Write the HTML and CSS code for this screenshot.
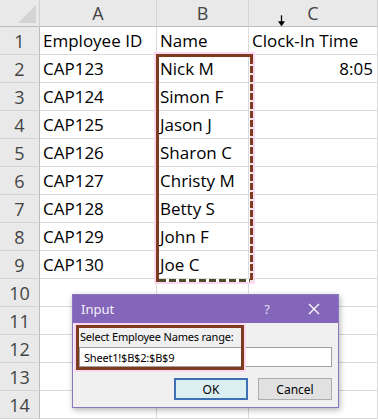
FILE: index.html
```html
<!DOCTYPE html>
<html lang="en">
<head>
    <meta charset="UTF-8">
    <title>Clock-In Sheet</title>
    <link rel="stylesheet" href="styles.css">
</head>
<body>

    <div id="sheet">
        <div class="grid">
            <div class="corner"><span class="tri"></span></div>
            <div class="colhead">A</div>
            <div class="colhead">B</div>
            <div class="colhead">C</div>

            <div class="rowhead">1</div><div class="cell">Employee ID</div><div class="cell">Name</div><div class="cell">Clock-In Time</div>
            <div class="rowhead">2</div><div class="cell">CAP123</div><div class="cell">Nick M</div><div class="cell num">8:05</div>
            <div class="rowhead">3</div><div class="cell">CAP124</div><div class="cell">Simon F</div><div class="cell"></div>
            <div class="rowhead">4</div><div class="cell">CAP125</div><div class="cell">Jason J</div><div class="cell"></div>
            <div class="rowhead">5</div><div class="cell">CAP126</div><div class="cell">Sharon C</div><div class="cell"></div>
            <div class="rowhead">6</div><div class="cell">CAP127</div><div class="cell">Christy M</div><div class="cell"></div>
            <div class="rowhead">7</div><div class="cell">CAP128</div><div class="cell">Betty S</div><div class="cell"></div>
            <div class="rowhead">8</div><div class="cell">CAP129</div><div class="cell">John F</div><div class="cell"></div>
            <div class="rowhead">9</div><div class="cell">CAP130</div><div class="cell">Joe C</div><div class="cell"></div>
            <div class="rowhead">10</div><div class="cell"></div><div class="cell"></div><div class="cell"></div>
            <div class="rowhead">11</div><div class="cell"></div><div class="cell"></div><div class="cell"></div>
            <div class="rowhead">12</div><div class="cell"></div><div class="cell"></div><div class="cell"></div>
            <div class="rowhead">13</div><div class="cell"></div><div class="cell"></div><div class="cell"></div>
            <div class="rowhead">14</div><div class="cell"></div><div class="cell"></div><div class="cell"></div>
        </div>

        <!-- selected range B2:B9 -->
        <div class="selection"><div class="ants"></div></div>

        <!-- column select cursor -->
        <svg class="cursor" width="9" height="12" viewBox="0 0 9 12">
            <path d="M3.5 0h2v6h3l-4 6-4-6h3z" fill="#000" stroke="#fff" stroke-width="0.6"/>
        </svg>

        <div class="dialog">
            <div class="titlebar">
                <span class="title">Input</span>
                <span class="help">?</span>
                <svg class="close" width="12" height="12" viewBox="0 0 12 12">
                    <path d="M1 1L11 11M11 1L1 11" stroke="#fff" stroke-width="1.3"/>
                </svg>
            </div>
            <div class="dbody">
                <div class="highlight"></div>
                <label for="rng">Select Employee Names range:</label>
                <input type="text" id="rng" value="Sheet1!$B$2:$B$9">
                <div class="buttons">
                    <button class="ok">OK</button>
                    <button class="cancel">Cancel</button>
                </div>
            </div>
        </div>
    </div>

</body>
</html>
```

FILE: styles.css
```css
body {
    margin: 0;
    background-color: #fff;
    font-family: "Open Sans", Arial, sans-serif;
}
#sheet {
    position: relative;
    width: 378px;
    height: 420px;
    overflow: hidden;
}
.grid {
    display: grid;
    grid-template-columns: 40px 117px 92px 129px;
    grid-template-rows: 27px repeat(14, 28px);
}
.corner {
    background-color: #e9e9e9;
    border-right: 1px solid #d0d0d0;
    border-bottom: 1px solid #bdbdbd;
    position: relative;
}
.tri {
    position: absolute;
    right: 3px;
    bottom: 3px;
    width: 0;
    height: 0;
    border-left: 18px solid transparent;
    border-bottom: 18px solid #d4d4d4;
}
.colhead {
    background-color: #e9e9e9;
    color: #444;
    font-size: 18px;
    display: flex;
    align-items: center;
    justify-content: center;
    border-right: 1px solid #d4d4d4;
    border-bottom: 1px solid #bdbdbd;
}
.rowhead {
    background-color: #e9e9e9;
    color: #444;
    font-size: 18px;
    display: flex;
    align-items: center;
    justify-content: center;
    border-right: 1px solid #bdbdbd;
    border-bottom: 1px solid #d4d4d4;
}
.cell {
    font-size: 17px;
    color: #000;
    display: flex;
    align-items: center;
    padding: 0 3px;
    white-space: nowrap;
    overflow: hidden;
    border-right: 1px solid #dadada;
    border-bottom: 1px solid #dadada;
}
.num {
    justify-content: flex-end;
    padding-right: 4px;
}
.selection {
    position: absolute;
    left: 156px;
    top: 54px;
    width: 91px;
    height: 222px;
    border: 3px solid #7e3b1f;
    box-shadow: 0 0 0 2px #fbd9f0;
}
.ants {
    position: absolute;
    right: -3px;
    top: 0;
    bottom: -3px;
    width: 3px;
    background: repeating-linear-gradient(to bottom, #7e3b1f 0 7px, #f3e4e4 7px 9px);
}
.selection::after {
    content: "";
    position: absolute;
    left: 0;
    right: 0;
    bottom: -3px;
    height: 3px;
    background: repeating-linear-gradient(to right, #4f4a2c 0 7px, #fff 7px 10px);
}
.cursor {
    position: absolute;
    left: 277px;
    top: 15px;
}
.dialog {
    position: absolute;
    left: 72px;
    top: 294px;
    width: 265px;
    height: 112px;
    background-color: #f0f0f0;
    border: 1px solid #8b77c0;
    box-shadow: 1px 2px 6px rgba(0, 0, 0, 0.3);
    font-family: "Noto Sans", Arial, sans-serif;
}
.titlebar {
    height: 28px;
    background-color: #8366b9;
    color: #fff;
    display: flex;
    align-items: center;
    padding: 0 0 0 8px;
}
.title {
    font-size: 13px;
    flex: 1;
    color: #f4f0fa;
}
.help {
    font-size: 13px;
    color: #e4ddf2;
    margin-right: 38px;
}
.close {
    margin-right: 18px;
}
.dbody {
    position: relative;
    padding: 6px 6px 0 6px;
}
.highlight {
    position: absolute;
    left: 3px;
    top: 2px;
    width: 162px;
    height: 39px;
    border: 3px solid #7e3b1f;
    box-shadow: 0 0 0 2px #fbd9f0;
    z-index: 2;
    pointer-events: none;
}
label {
    display: block;
    height: 18px;
    line-height: 16px;
    padding-left: 1px;
    font-size: 11px;
    letter-spacing: -0.2px;
    color: #000;
    white-space: nowrap;
}
input {
    display: block;
    margin: 0;
    width: 100%;
    height: 20px;
    box-sizing: border-box;
    border: 1px solid #a0a0a0;
    background-color: #fff;
    padding: 0 4px;
    font-family: "Noto Sans", Arial, sans-serif;
    font-size: 11px;
    letter-spacing: -0.2px;
    color: #000;
}
.buttons {
    display: flex;
    justify-content: flex-end;
    gap: 10px;
    margin-top: 11px;
}
button {
    width: 74px;
    height: 22px;
    font-family: "Noto Sans", Arial, sans-serif;
    font-size: 12px;
    color: #000;
    padding: 0;
}
.ok {
    background-color: #dbeff1;
    border: 2px solid #3f6fb5;
}
.cancel {
    background-color: #e1e1e1;
    border: 1px solid #adadad;
}
```
